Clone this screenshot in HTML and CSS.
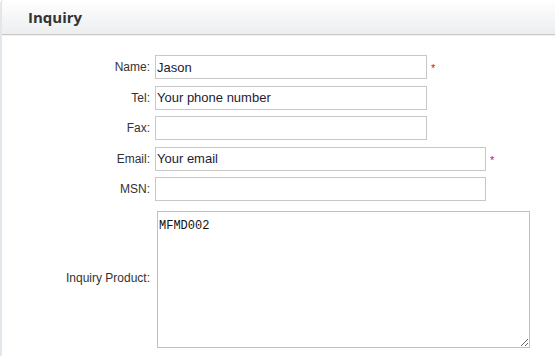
FILE: index.html
```html
<!DOCTYPE html>
<html lang="en">
<head>
  <meta charset="UTF-8">
  <title>Inquiry</title>
  <link rel="stylesheet" href="styles.css">
</head>
<body>

  <div class="panel">
    <div class="panel-head">Inquiry</div>

    <form class="inquiry">
      <label class="label" for="name">Name:</label>
      <div class="field">
        <input type="text" id="name" class="text" value="Jason">
        <span class="req">*</span>
      </div>

      <label class="label" for="tel">Tel:</label>
      <div class="field">
        <input type="text" id="tel" class="text" value="Your phone number">
      </div>

      <label class="label" for="fax">Fax:</label>
      <div class="field">
        <input type="text" id="fax" class="text">
      </div>

      <label class="label" for="email">Email:</label>
      <div class="field">
        <input type="text" id="email" class="text wide" value="Your email">
        <span class="req">*</span>
      </div>

      <label class="label" for="msn">MSN:</label>
      <div class="field">
        <input type="text" id="msn" class="text wide">
      </div>

      <label class="label middle" for="product">Inquiry Product:</label>
      <div class="field">
        <textarea id="product" class="area">MFMD002</textarea>
      </div>
    </form>
  </div>

</body>
</html>
```

FILE: styles.css
```css
body {
  margin: 0;
  background-color: #fff;
  font-family: Arial, 'Liberation Sans', sans-serif;
  color: #333;
}

.panel {
  border-left: 2px solid #e2e7ec;
  border-top-left-radius: 4px;
  height: 356px;
  box-sizing: border-box;
}

.panel-head {
  height: 34px;
  line-height: 35px;
  padding-left: 26px;
  font-family: 'Open Sans', sans-serif;
  font-size: 15px;
  font-weight: bold;
  color: #333;
  background: linear-gradient(#ffffff, #eceef0);
  border-bottom: 1px solid #c8c8c8;
  box-shadow: 0 1px 0 #f2f2f2;
  border-top-left-radius: 4px;
}

.inquiry {
  display: grid;
  grid-template-columns: 148px auto;
  column-gap: 5px;
  row-gap: 6.5px;
  padding-top: 20px;
}

.label {
  font-size: 12px;
  text-align: right;
  line-height: 24px;
  color: #333;
}

.label.middle {
  align-self: center;
}

.field {
  display: flex;
  align-items: flex-start;
}

.text {
  width: 272px;
  height: 24px;
  box-sizing: border-box;
  border: 1px solid #c8c8c8;
  padding: 0 1px;
  margin: 0;
  font-family: Arial, 'Liberation Sans', sans-serif;
  font-size: 13px;
  color: #1c1c34;
  outline: none;
}

.text.wide {
  width: 331px;
}

.req {
  color: #c0154b;
  font-size: 11px;
  margin: 8px 0 0 4px;
  line-height: 11px;
}

.area {
  width: 373px;
  height: 137px;
  box-sizing: border-box;
  margin: 3px 0 0 2px;
  border: 1px solid #c0c0c0;
  padding: 7px 1px;
  font-family: 'Liberation Mono', monospace;
  font-size: 12px;
  color: #111;
  outline: none;
}
```
